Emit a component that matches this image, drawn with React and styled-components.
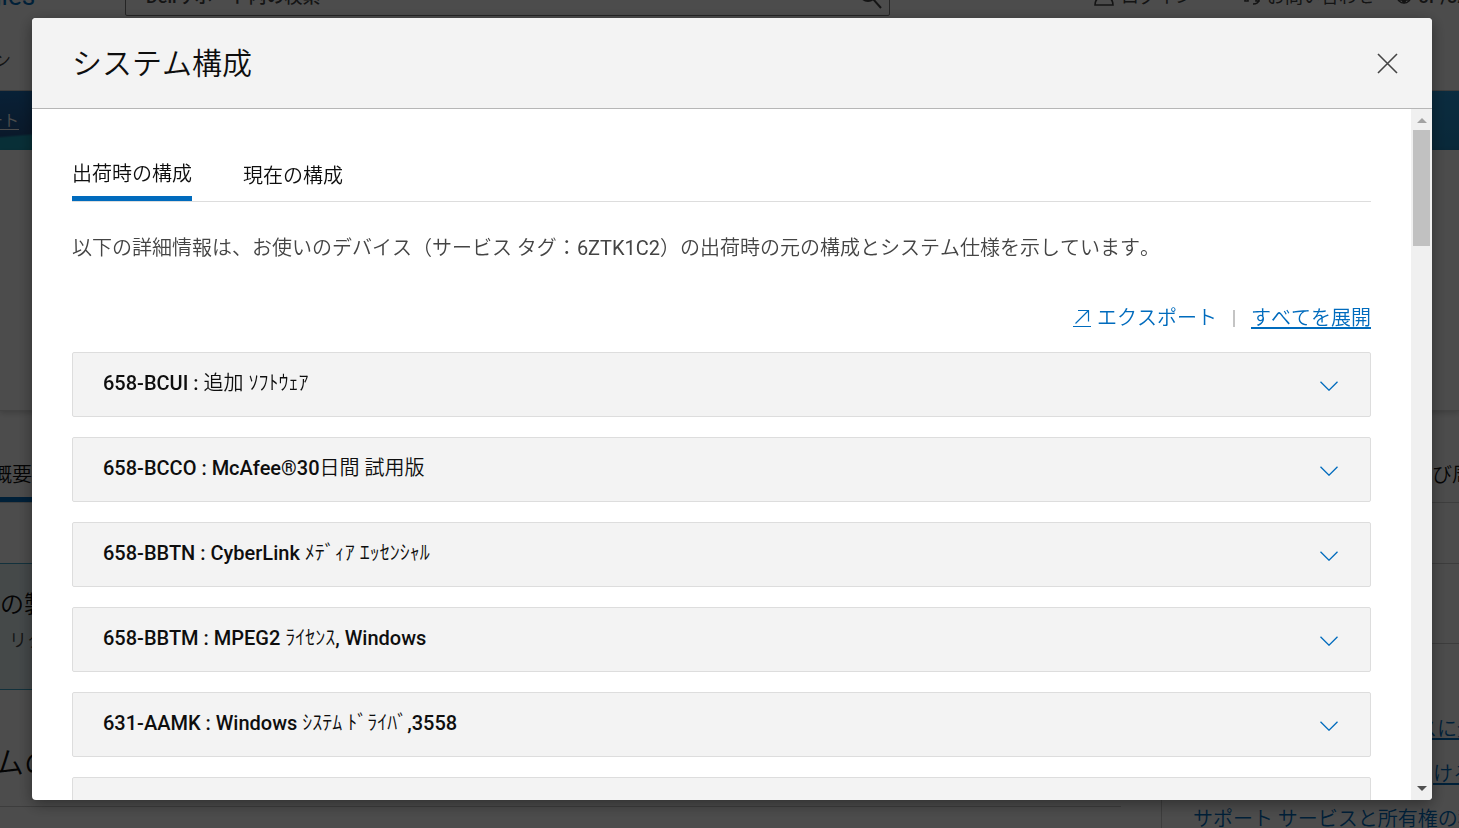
import React, { useState } from "react";
import styled, { createGlobalStyle } from "styled-components";

const GlobalStyle = createGlobalStyle`
	* {
		box-sizing: border-box;
	}

	body {
		margin: 0;
		background: #fff;
		color: #0e0e0e;
		font-family: Roboto, "Noto Sans CJK JP", sans-serif;
		font-size: 20px;
		font-weight: 350;
		font-kerning: none;
		line-height: 30px;
	}

	button {
		padding: 0;
		border: none;
		background: none;
		color: inherit;
		font: inherit;
		font-kerning: inherit;
		cursor: pointer;
	}

	a {
		color: #006bbd;
	}
`;

/* page behind the dialog */

const Page = styled.div`
	height: 100vh;
	overflow: hidden;
`;

const TopBar = styled.header`
	display: flex;
	align-items: flex-end;
	height: 16px;
	overflow: hidden;
	font-size: 18px;
`;

const Logo = styled.span`
	flex: none;
	width: 125px;
	color: #006bbd;
	font-size: 26px;
	font-weight: 400;
	line-height: 40px;
	text-indent: -13px;
`;

const SearchBox = styled.div`
	display: flex;
	flex: 0 0 53%;
	align-items: center;
	justify-content: space-between;
	max-width: 765px;
	height: 38px;
	padding: 0 6px 0 18px;
	border: 1px solid #7e7e7e;
	border-radius: 2px;
`;

const SearchInput = styled.input`
	flex: 1;
	border: none;
	background: none;
	font: inherit;
	font-weight: 500;

	&::placeholder {
		color: #444;
	}
`;

const TopLinks = styled.div`
	display: flex;
	flex: 1;
	gap: 50px;
	min-width: 0;
	padding-left: 203px;
	white-space: nowrap;
`;

const TopLink = styled.span`
	display: flex;
	flex: none;
	gap: 6px;
	align-items: center;
	height: 36px;
	margin-left: ${(props) => (props.$last ? "-30px" : "0")};
	padding-bottom: 2px;
	color: #444;
	font-weight: ${(props) => (props.$last ? 500 : 400)};
`;

const NavRow = styled.nav`
	display: flex;
	align-items: center;
	height: 75px;
	padding-top: 16px;
	border-bottom: 1px solid #ccc;
	color: #444;
	font-size: 18px;
`;

const ClippedLeft = styled.span`
	display: flex;
	justify-content: flex-end;
	width: ${(props) => props.$width}px;
	overflow: hidden;
	white-space: nowrap;
`;

const Hero = styled.div`
	height: 59px;
	padding-top: 15px;
	background:
		linear-gradient(175deg, #1c6fb8 0%, #23558f 70%, #1d9fba 74%, #1d9fba 100%) left / 60px 100% no-repeat,
		linear-gradient(#2593d5, #2088c0);
	color: #fff;
	font-size: 16px;
	text-decoration: underline;
	text-underline-offset: 3px;
`;

const Summary = styled.div`
	height: 261px;
	border-bottom: 1px solid #ddd;
	box-shadow: 0 2px 6px rgba(0, 0, 0, 0.2);
`;

const PageTabs = styled.div`
	display: flex;
	align-items: flex-end;
	justify-content: space-between;
	height: 92px;
	border-bottom: 1px solid #d0d0d0;
`;

const PageTab = styled.div`
	width: ${(props) => (props.$active ? "60px" : "27px")};
	height: 42px;
	overflow: hidden;
	border-bottom: 5px solid ${(props) => (props.$active ? "#006bbd" : "transparent")};
	color: #0e0e0e;
	white-space: nowrap;
	text-indent: ${(props) => (props.$active ? "-8px" : "0")};
`;

const Columns = styled.div`
	display: grid;
	grid-template-columns: minmax(0, 1121fr) minmax(0, 298fr);
	gap: 40px;
	padding-top: 60px;
`;

const Notice = styled.div`
	height: 127px;
	padding-top: 26px;
	border: 1px solid #3fa6c9;
	border-width: 1px 0;
	background: #e6f3f6;
`;

const NoticeTitle = styled.p`
	margin: 0 0 6px;
	font-size: 24px;
`;

const NoticeText = styled.p`
	margin: 0;
	color: #444;
	font-size: 18px;
	text-indent: -9px;
`;

const SectionTitle = styled.h2`
	margin: 0;
	padding: 52px 0 23px;
	border-bottom: 1px solid #ccc;
	font-size: 30px;
	font-weight: 350;
	line-height: 41px;
	text-indent: -6px;
`;

const Side = styled.div`
	border-top: 1px solid #ccc;
	border-left: 1px solid #ccc;
`;

const SideHead = styled.div`
	height: 80px;
	border-bottom: 1px solid #ccc;
`;

const SideLinks = styled.div`
	display: flex;
	flex-direction: column;
	gap: 15px;
	padding: 70px 0 0 31px;
	white-space: nowrap;
	overflow: hidden;
`;

const SideLink = styled.a`
	padding-left: ${(props) => props.$indent || 0}px;
	text-decoration-thickness: 2px;
	text-underline-offset: 2px;
`;

/* dialog */

const Overlay = styled.div`
	position: fixed;
	inset: 0;
	display: flex;
	padding: 18px 27px 28px 32px;
	background: rgba(0, 0, 0, 0.7);
`;

const Dialog = styled.section`
	display: flex;
	flex: 1;
	flex-direction: column;
	min-width: 0;
	overflow: hidden;
	border-radius: 4px;
	background: #fff;
	box-shadow: 0 4px 16px rgba(0, 0, 0, 0.4);
`;

const DialogHeader = styled.header`
	display: flex;
	align-items: center;
	justify-content: space-between;
	padding: 21px 32px 19px 40px;
	border-bottom: 1px solid #b6b6b6;
	background: #f3f3f3;
`;

const DialogTitle = styled.h1`
	margin: 0;
	font-size: 30px;
	font-weight: 350;
	line-height: 50px;
`;

const CloseButton = styled.button`
	display: flex;
	padding: 2px;
	color: #444;
`;

const DialogBody = styled.div`
	display: flex;
	flex: 1;
	min-height: 0;
`;

const Content = styled.div`
	flex: 1;
	min-width: 0;
	padding: 50px 40px 0;
	overflow-y: auto;
	scrollbar-width: none;
`;

const Tabs = styled.div`
	display: flex;
	gap: 51px;
	align-items: flex-end;
	border-bottom: 1px solid #ddd;
`;

const Tab = styled.button`
	padding-bottom: ${(props) => (props.$active ? "7px" : "10px")};
	border-bottom: ${(props) => (props.$active ? "5px solid #006bbd" : "none")};
`;

const Description = styled.p`
	margin: 31px 0 40px;
	color: #444;
`;

const ServiceTag = styled.span`
	font-weight: 400;
`;

const Actions = styled.div`
	display: flex;
	gap: 16px;
	align-items: center;
	justify-content: flex-end;
	margin-bottom: 19px;
`;

const ExportLink = styled.a`
	display: flex;
	gap: 6px;
	align-items: center;
	text-decoration: none;
`;

const Divider = styled.span`
	width: 2px;
	height: 17px;
	background: #c4c4c4;
`;

const ExpandButton = styled.button`
	color: #006bbd;
	text-decoration: underline;
	text-decoration-thickness: 2px;
	text-underline-offset: 2px;
`;

const List = styled.div`
	display: flex;
	flex-direction: column;
	gap: 20px;
	padding-bottom: 40px;
`;

const Item = styled.button`
	display: flex;
	align-items: center;
	justify-content: space-between;
	padding: 15px 32px 18px 30px;
	border: 1px solid #ddd;
	border-radius: 2px;
	background: #f3f3f3;
	font-kerning: normal;
	line-height: 30px;
	text-align: left;
`;

const ItemCode = styled.span`
	font-weight: 500;
`;

const ItemIcon = styled.svg`
	flex: none;
	margin-top: 5px;
`;

const ScrollRail = styled.div`
	display: flex;
	flex-direction: column;
	align-items: center;
	width: 21px;
	padding: 9px 2px;
	background: #f0f0f0;
`;

const ScrollThumb = styled.div`
	width: 17px;
	height: 116px;
	margin: 7px 0 auto;
	background: #c1c1c1;
`;

const items = [
	{ code: "658-BCUI : ", name: "追加 ｿﾌﾄｳｪｱ" },
	{ code: "658-BCCO : McAfee®30", name: "日間 試用版" },
	{ code: "658-BBTN : CyberLink ", name: "ﾒﾃﾞｨｱ ｴｯｾﾝｼｬﾙ" },
	{ code: "658-BBTM : MPEG2 ", name: "ﾗｲｾﾝｽ", end: ", Windows" },
	{ code: "631-AAMK : Windows ", name: "ｼｽﾃﾑ ﾄﾞﾗｲﾊﾞ", end: ",3558" },
	{ code: "619-AHCY : Windows", name: "" },
];

const Background = () => {
	return (
		<Page aria-hidden="true">
			<TopBar>
				<Logo>gies</Logo>
				<SearchBox>
					<SearchInput aria-label="検索" placeholder="Dellサポート内の検索" />
					<svg width="24" height="24" viewBox="0 0 24 24" fill="none" stroke="#444" strokeWidth="2">
						<circle cx="9" cy="8" r="8" />
						<path d="M14 14l8 9" />
					</svg>
				</SearchBox>
				<TopLinks>
					<TopLink>
						<svg width="22" height="24" viewBox="0 0 22 24" fill="none" stroke="#444" strokeWidth="1.6">
							<circle cx="11" cy="7" r="5" />
							<path d="M2 20c0-5 3-8 9-8s9 3 9 8z" />
						</svg>
						ログイン
					</TopLink>
					<TopLink>
						<svg width="18" height="24" viewBox="0 0 18 24" fill="none" stroke="#444" strokeWidth="1.6">
							<path d="M2 13V9a7 7 0 0 1 14 0v5q0 5-6 5M2 10h3v6H2zM13 10h3v6h-3z" />
						</svg>
						お問い合わせ
					</TopLink>
					<TopLink $last>
						<svg width="18" height="24" viewBox="0 0 18 24" fill="none" stroke="#444" strokeWidth="1.4">
							<circle cx="9" cy="11" r="7" />
							<path d="M2 11h14M9 4v14M4 15h10M9 4q-6 7 0 14M9 4q6 7 0 14" />
						</svg>
						JP/JA
					</TopLink>
				</TopLinks>
			</TopBar>
			<NavRow>
				<ClippedLeft $width={11}>ン</ClippedLeft>
			</NavRow>
			<Hero>
				<ClippedLeft $width={19}>ート</ClippedLeft>
			</Hero>
			<Summary />
			<PageTabs>
				<PageTab $active>概要</PageTab>
				<PageTab>び周辺</PageTab>
			</PageTabs>
			<Columns>
				<div>
					<Notice>
						<NoticeTitle>の製品</NoticeTitle>
						<NoticeText>、リク</NoticeText>
					</Notice>
					<SectionTitle>ムの</SectionTitle>
				</div>
				<Side>
					<SideHead />
					<SideLinks>
						<SideLink href="#service" $indent={224}>スに登録</SideLink>
						<SideLink href="#receive" $indent={240}>ける</SideLink>
						<SideLink href="#transfer">サポート サービスと所有権の移行</SideLink>
					</SideLinks>
				</Side>
			</Columns>
		</Page>
	);
};

const Row = (props) => {
	return (
		<Item type="button" aria-expanded="false">
			<span>
				<ItemCode>{props.item.code}</ItemCode>
				{props.item.name}
				<ItemCode>{props.item.end}</ItemCode>
			</span>
			<ItemIcon width="18" height="10" viewBox="0 0 18 10" fill="none" stroke="#006bbd" strokeWidth="1.3">
				<path d="M.5.7L9 9.2 17.5.7" />
			</ItemIcon>
		</Item>
	);
};

const App = () => {
	const [tab, setTab] = useState("shipped");

	return (
		<>
			<GlobalStyle />
			<Background />
			<Overlay>
				<Dialog role="dialog" aria-modal="true" aria-labelledby="dialogTitle">
					<DialogHeader>
						<DialogTitle id="dialogTitle">システム構成</DialogTitle>
						<CloseButton type="button" aria-label="閉じる">
							<svg width="22" height="22" viewBox="0 0 22 22" fill="none" stroke="currentColor" strokeWidth="1.6">
								<path d="M2 1l19 19M21 1l-19 19" />
							</svg>
						</CloseButton>
					</DialogHeader>
					<DialogBody>
						<Content>
							<Tabs role="tablist">
								<Tab
									type="button"
									role="tab"
									aria-selected={tab === "shipped"}
									$active={tab === "shipped"}
									onClick={() => setTab("shipped")}
								>
									出荷時の構成
								</Tab>
								<Tab
									type="button"
									role="tab"
									aria-selected={tab === "current"}
									$active={tab === "current"}
									onClick={() => setTab("current")}
								>
									現在の構成
								</Tab>
							</Tabs>
							<Description>
								以下の詳細情報は、お使いのデバイス（サービス タグ：<ServiceTag>6ZTK1C2</ServiceTag>）の出荷時の元の構成とシステム仕様を示しています。
							</Description>
							<Actions>
								<ExportLink href="#export">
									<svg width="18" height="20" viewBox="0 0 18 20" fill="none" stroke="currentColor" strokeWidth="1.2">
										<path d="M5 2.5h10.500v11M15.500 2.500L2.500 15.500M0 18.500h18" />
									</svg>
									エクスポート
								</ExportLink>
								<Divider />
								<ExpandButton type="button">すべてを展開</ExpandButton>
							</Actions>
							<List>
								{items.map((item) => (
									<Row key={item.code} item={item} />
								))}
							</List>
						</Content>
						<ScrollRail>
							<svg width="10" height="5" viewBox="0 0 10 5" fill="#a3a3a3">
								<path d="M0 5l5-5 5 5z" />
							</svg>
							<ScrollThumb />
							<svg width="10" height="5" viewBox="0 0 10 5" fill="#505050">
								<path d="M0 0l5 5 5-5z" />
							</svg>
						</ScrollRail>
					</DialogBody>
				</Dialog>
			</Overlay>
		</>
	);
};

export default App;
